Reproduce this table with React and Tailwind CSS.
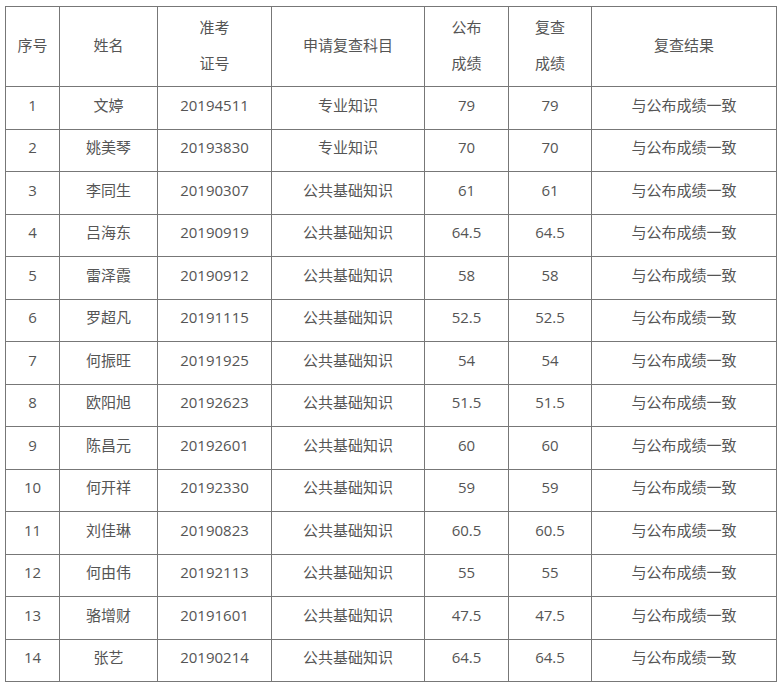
import React from 'react';

const rows = [
  ['1', '文婷', '20194511', '专业知识', '79', '79'],
  ['2', '姚美琴', '20193830', '专业知识', '70', '70'],
  ['3', '李同生', '20190307', '公共基础知识', '61', '61'],
  ['4', '吕海东', '20190919', '公共基础知识', '64.5', '64.5'],
  ['5', '雷泽霞', '20190912', '公共基础知识', '58', '58'],
  ['6', '罗超凡', '20191115', '公共基础知识', '52.5', '52.5'],
  ['7', '何振旺', '20191925', '公共基础知识', '54', '54'],
  ['8', '欧阳旭', '20192623', '公共基础知识', '51.5', '51.5'],
  ['9', '陈昌元', '20192601', '公共基础知识', '60', '60'],
  ['10', '何开祥', '20192330', '公共基础知识', '59', '59'],
  ['11', '刘佳琳', '20190823', '公共基础知识', '60.5', '60.5'],
  ['12', '何由伟', '20192113', '公共基础知识', '55', '55'],
  ['13', '骆增财', '20191601', '公共基础知识', '47.5', '47.5'],
  ['14', '张艺', '20190214', '公共基础知识', '64.5', '64.5'],
];

const cell = 'border border-[#777] text-center align-middle px-0 pt-0';

const App = () => {
  return (
    <div className="pt-[6px] pl-[5px] bg-white min-h-screen">
      <table
        className="border-collapse table-fixed w-[771px] text-[15px] text-[#555]"
        style={{ fontFamily: '"Open Sans", "Noto Sans CJK SC", sans-serif' }}
      >
        <colgroup>
          <col className="w-[54px]" />
          <col className="w-[98px]" />
          <col className="w-[114px]" />
          <col className="w-[153px]" />
          <col className="w-[84px]" />
          <col className="w-[83px]" />
          <col className="w-[185px]" />
        </colgroup>
        <thead>
          <tr className="h-[80px] leading-[36px]">
            <th className={cell + ' font-normal pb-[4px]'}>序号</th>
            <th className={cell + ' font-normal pb-[4px]'}>姓名</th>
            <th className={cell + ' font-normal pb-[4px]'}>准考<br />证号</th>
            <th className={cell + ' font-normal pb-[4px]'}>申请复查科目</th>
            <th className={cell + ' font-normal pb-[4px]'}>公布<br />成绩</th>
            <th className={cell + ' font-normal pb-[4px]'}>复查<br />成绩</th>
            <th className={cell + ' font-normal pb-[4px]'}>复查结果</th>
          </tr>
        </thead>
        <tbody>
          {rows.map((r) => (
            <tr key={r[0]} className="h-[42.5px] leading-[20px]">
              {r.map((v, i) => (
                <td key={i} className={cell + ' pb-[6px]'}>{v}</td>
              ))}
              <td className={cell + ' pb-[6px]'}>与公布成绩一致</td>
            </tr>
          ))}
        </tbody>
      </table>
    </div>
  );
};

export default App;
